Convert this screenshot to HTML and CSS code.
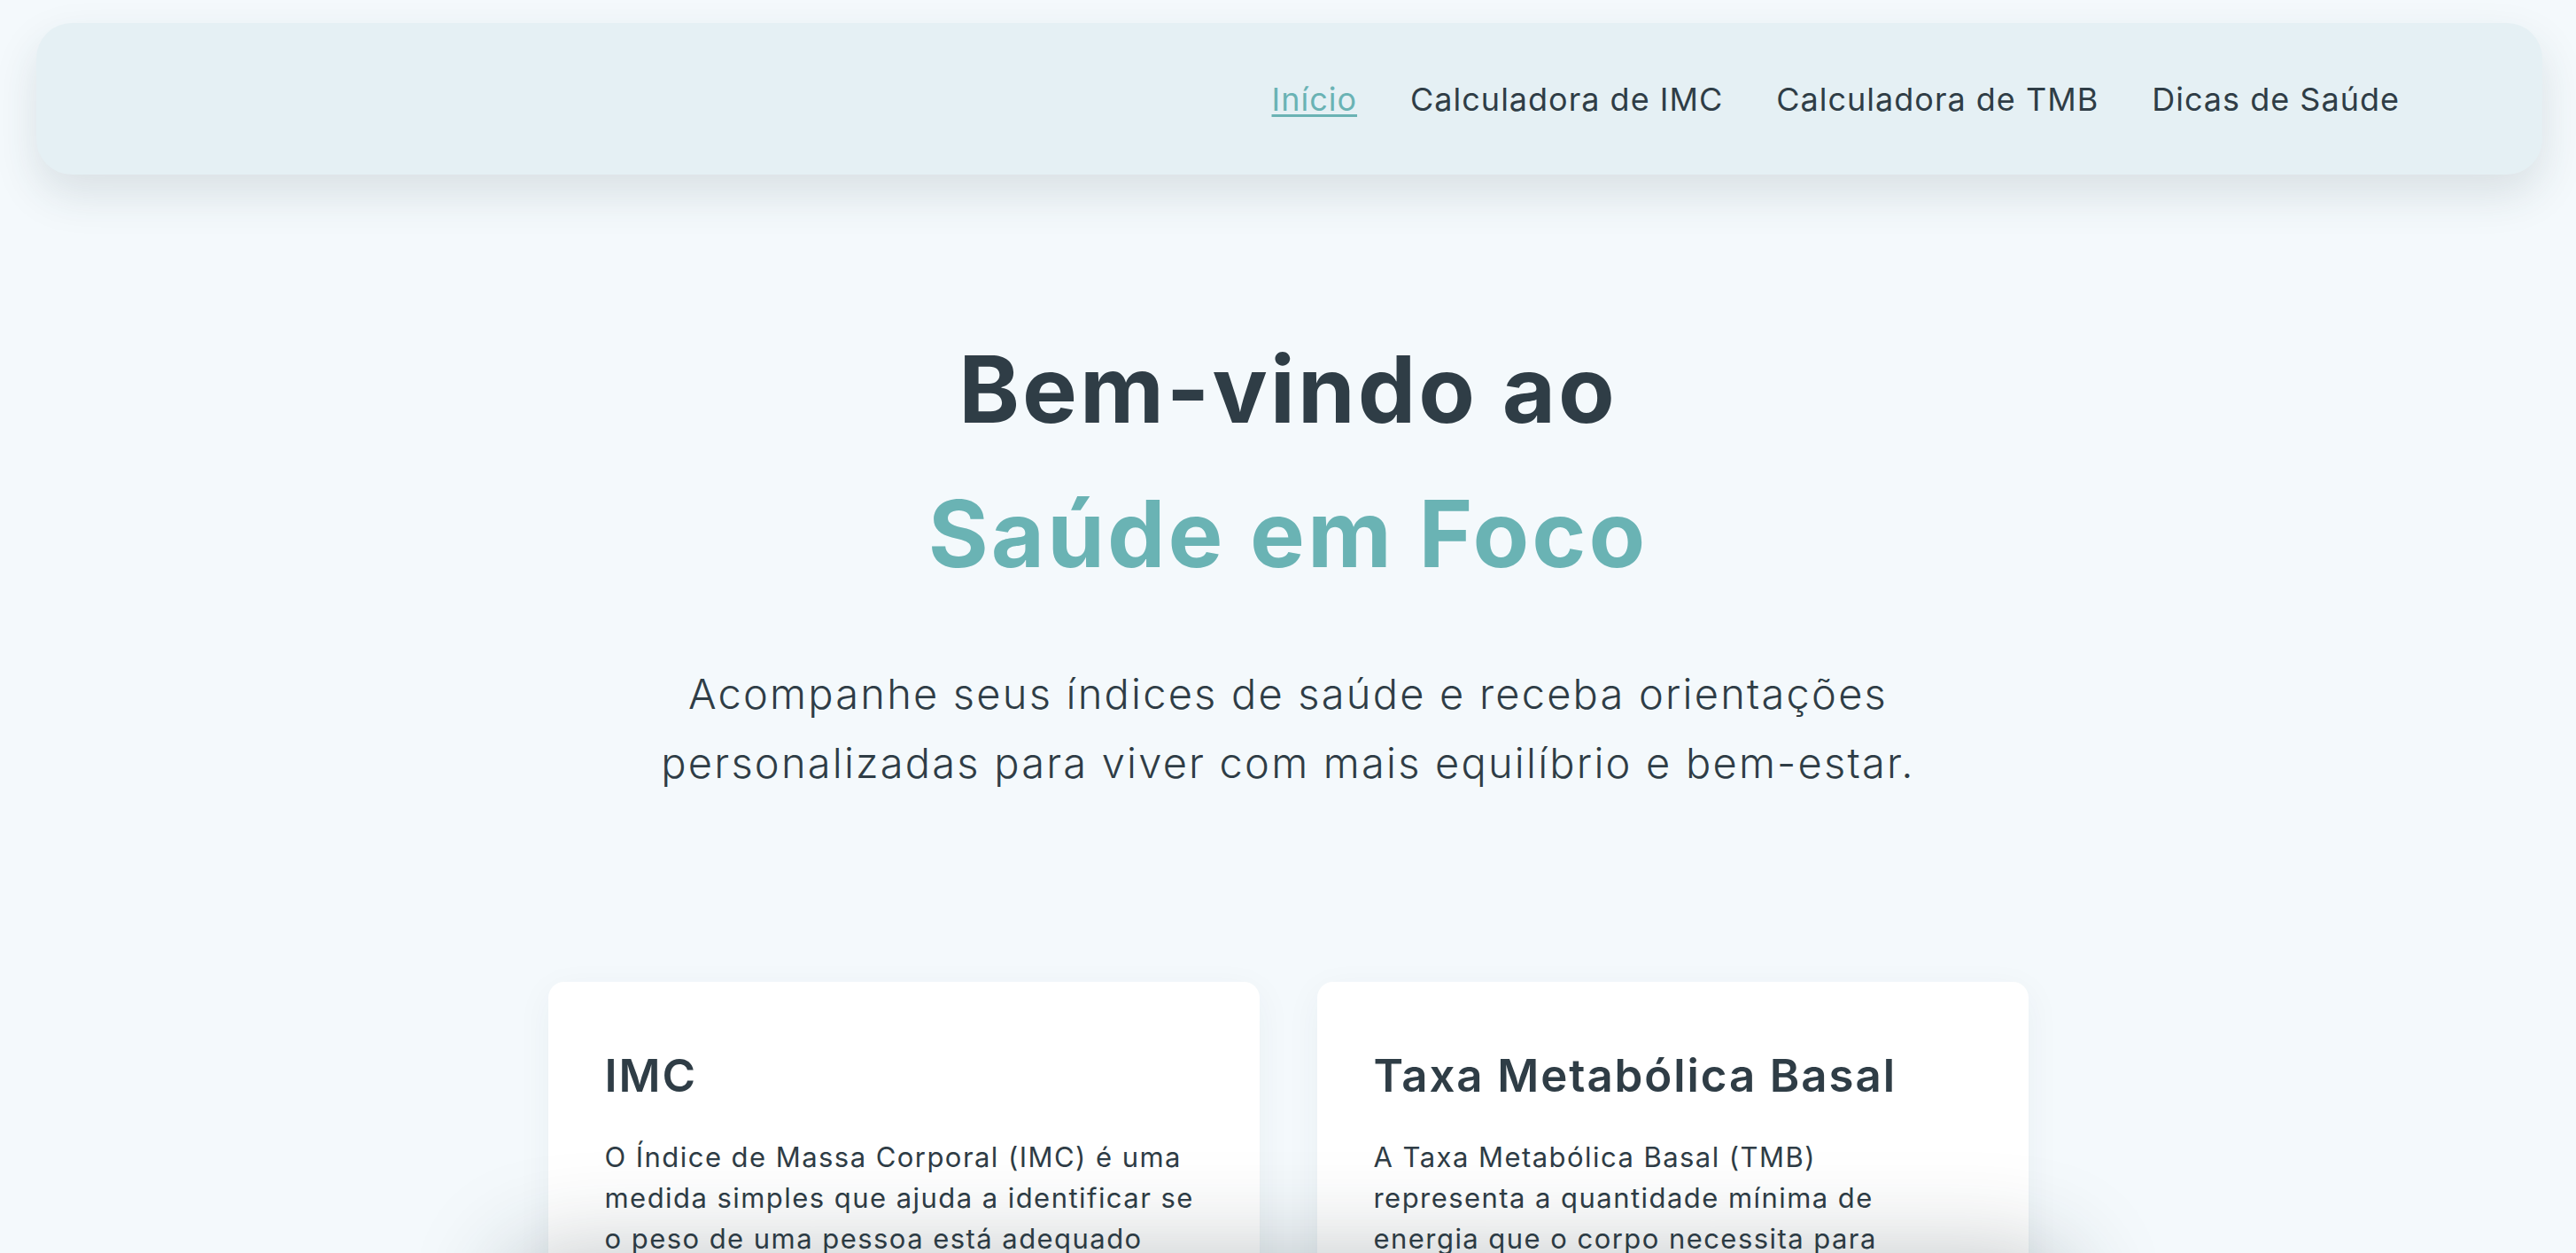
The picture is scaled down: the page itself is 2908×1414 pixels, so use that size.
FILE: index.html
```html
<!DOCTYPE html>
<html lang="pt-BR">
<head>
<meta charset="utf-8">
<title>Saúde em Foco</title>
<link rel="stylesheet" href="styles.css">
</head>
<body>
<header class="navbar">
  <nav class="nav-links">
    <a href="#" class="nav-link active">Início</a>
    <a href="#" class="nav-link">Calculadora de IMC</a>
    <a href="#" class="nav-link">Calculadora de TMB</a>
    <a href="#" class="nav-link">Dicas de Saúde</a>
  </nav>
</header>
<main>
  <section class="hero">
    <h1 class="hero-title">Bem-vindo ao <span class="brand">Saúde em Foco</span></h1>
    <p class="hero-text">Acompanhe seus índices de saúde e receba orientações personalizadas para viver com mais equilíbrio e bem-estar.</p>
  </section>
  <section class="cards">
    <article class="card">
      <h2 class="card-title">IMC</h2>
      <p class="card-text">O Índice de Massa Corporal (IMC) é uma medida simples que ajuda a identificar se o peso de uma pessoa está adequado considerando a sua altura, indicando possíveis riscos à saúde.</p>
    </article>
    <article class="card">
      <h2 class="card-title">Taxa Metabólica Basal</h2>
      <p class="card-text">A Taxa Metabólica Basal (TMB) representa a quantidade mínima de energia que o corpo necessita para manter suas funções vitais em repouso absoluto.</p>
    </article>
  </section>
</main>
<div class="floating-panel" aria-hidden="true"></div>
</body>
</html>
```

FILE: styles.css
```css
* { box-sizing: border-box; }

html, body {
  margin: 0;
  padding: 0;
}

body {
  background: #f4f9fc;
  font-family: "Inter", "Open Sans", sans-serif;
  color: #2f3d46;
  overflow: hidden;
  height: 1414px;
}

.navbar {
  margin: 26px 38px 0 41px;
  height: 171px;
  background: #e5f0f4;
  border-radius: 40px;
  box-shadow: 0 22px 50px rgba(40, 60, 70, 0.13);
  display: flex;
  align-items: center;
  justify-content: flex-end;
  padding-right: 161px;
}

.nav-links {
  display: flex;
  gap: 60px;
}

.nav-link {
  font-size: 36px;
  font-weight: 400;
  letter-spacing: 1px;
  color: #2f3d46;
  text-decoration: none;
}

.nav-link.active {
  color: #6ab3b4;
  text-decoration: underline;
  text-decoration-thickness: 3px;
  text-underline-offset: 4px;
}

.hero {
  text-align: center;
  padding-top: 161px;
}

.hero-title {
  margin: 0;
  font-size: 104px;
  font-weight: 700;
  line-height: 163px;
  color: #2f3d46;
  letter-spacing: 3px;
}

.brand {
  display: block;
  color: #6ab3b4;
}

.hero-text {
  margin: 60px auto 0;
  max-width: 1520px;
  font-size: 47px;
  font-weight: 300;
  line-height: 78px;
  letter-spacing: 2.2px;
  color: #2f3d46;
}

.cards {
  display: flex;
  justify-content: center;
  gap: 65px;
  margin-top: 208px;
}

.card {
  width: 803px;
  background: #ffffff;
  border-radius: 18px;
  padding: 75px 60px 64px 64px;
  box-shadow: 0 10px 40px rgba(40, 60, 70, 0.05);
}

.card-title {
  margin: 0 0 39px;
  font-size: 51px;
  font-weight: 600;
  line-height: 1.2;
  letter-spacing: 1.9px;
  color: #2f3d46;
}

.card-text {
  margin: 0;
  font-size: 31px;
  font-weight: 400;
  line-height: 46px;
  letter-spacing: 1.45px;
  color: #2f3d46;
}

.floating-panel {
  position: fixed;
  left: 50%;
  bottom: -260px;
  width: 1760px;
  height: 260px;
  transform: translateX(-50%);
  background: #f4f9fc;
  border-radius: 40px;
  box-shadow: 0 0 110px rgba(30, 45, 55, 0.28);
}
```
